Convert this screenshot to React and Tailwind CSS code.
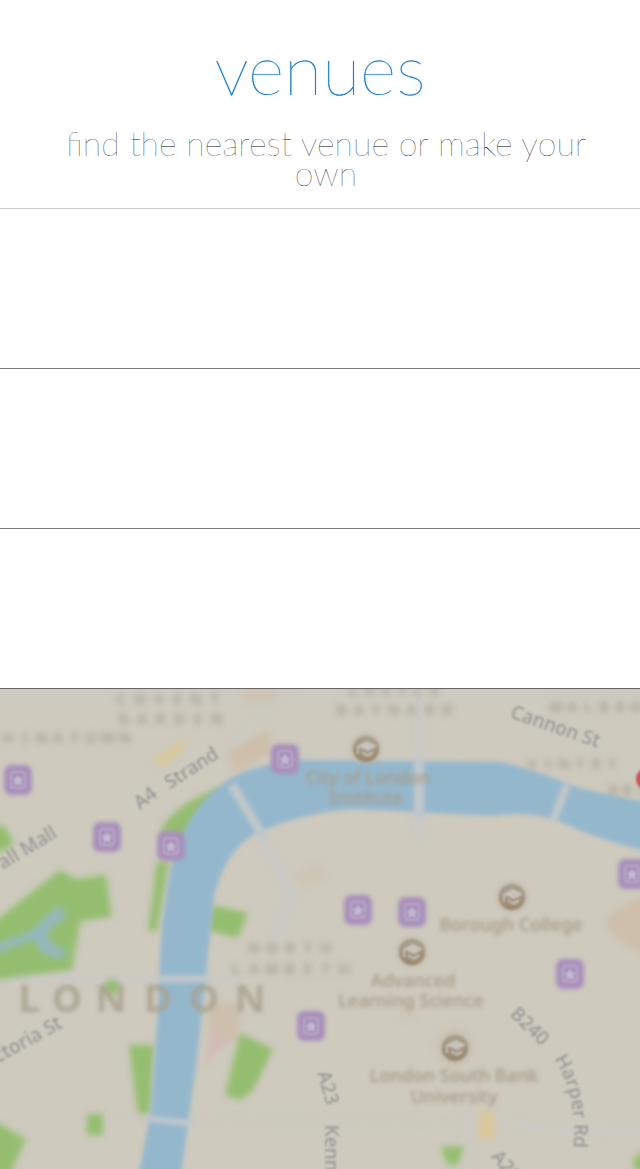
const stations = [
  [18, 91], [107, 148], [171, 157], [285, 70], [358, 221], [412, 223], [632, 185], [570, 285], [311, 337],
];

const colleges = [
  [366, 60], [512, 208], [412, 263], [455, 359],
];

const districts = [
  ["COVENT", 168, 15, 112],
  ["GARDEN", 170, 35, 112],
  ["CHINATOWN", 58, 54, 150],
  ["CASTLE", 394, 7, 98],
  ["BAYNARD", 394, 26, 124],
  ["WALBROOK", 612, 23, 128],
  ["VINTRY", 572, 80, 96],
  ["BRIDGE", 648, 106, 84],
  ["NORTH", 290, 264, 90],
  ["LAMBETH", 290, 285, 126],
];

const places = [
  ["City of London", 368, 95],
  ["Institute", 366, 115],
  ["Borough College", 511, 242],
  ["Advanced", 413, 298],
  ["Learning Science", 411, 318],
  ["London South Bank", 454, 393],
  ["University", 454, 414],
];

const streets = [
  ["A4", 146, 110, -38],
  ["Strand", 192, 80, -33],
  ["Pall Mall", 23, 163, -31],
  ["Cannon St", 555, 39, 19],
  ["Victoria St", 21, 356, -29],
  ["A23", 327, 399, 74],
  ["Kennington", 330, 489, 90],
  ["B240", 529, 338, 44],
  ["A201", 509, 482, 50],
];

function Station({ x, y }) {
  return (
    <g transform={`translate(${x} ${y})`}>
      <rect x="-14" y="-15" width="28" height="30" rx="7" fill="#a890ba" filter="url(#soft)" />
      <g filter="url(#slight)">
        <rect x="-7" y="-8" width="14" height="16" rx="3" fill="none" stroke="#b9a8c6" strokeWidth="2" />
        <path d="M0-5 2-2 5-1 3 2 4 6 0 4-4 6-3 2-5-1-2-2Z" fill="#c4b9d1" />
      </g>
    </g>
  );
}

function College({ x, y }) {
  return (
    <g transform={`translate(${x} ${y})`}>
      <circle r="15" fill="#b5aa9a" opacity="0.6" filter="url(#soft)" />
      <g filter="url(#slight)">
        <circle r="13" fill="url(#badge)" />
        <path d="M-9-3 1-8 11-3 2 2Z" fill="#c8c3bc" />
        <path d="M-8-3V5" stroke="#c2bbb1" strokeWidth="2" />
        <path d="M-4 2 1 5 7 2V5L2 8-4 5Z" fill="#c2bbb1" />
      </g>
    </g>
  );
}

function VenueMap() {
  return (
    <svg viewBox="0 0 640 480" role="img" aria-label="Map of venues in London" className="block h-auto w-full bg-[#cecabe] font-['Noto_Sans',sans-serif]">
      <defs>
        <filter id="soft" x="-50%" y="-50%" width="200%" height="200%"><feGaussianBlur stdDeviation="2" /></filter>
        <filter id="slight" x="-20%" y="-20%" width="140%" height="140%"><feGaussianBlur stdDeviation="0.8" /></filter>
        <filter id="water" filterUnits="userSpaceOnUse" x="-30" y="-30" width="720" height="560"><feGaussianBlur stdDeviation="2.2" /></filter>
        <filter id="area" filterUnits="userSpaceOnUse" x="-30" y="-30" width="700" height="540"><feGaussianBlur stdDeviation="3" /></filter>
        <filter id="text" filterUnits="userSpaceOnUse" x="-50" y="-30" width="760" height="560"><feGaussianBlur stdDeviation="2" /></filter>
        <filter id="far" filterUnits="userSpaceOnUse" x="-50" y="-30" width="760" height="560"><feGaussianBlur stdDeviation="3" /></filter>
        <filter id="street" filterUnits="userSpaceOnUse" x="-50" y="-50" width="760" height="600"><feGaussianBlur stdDeviation="1.2" /></filter>
        <linearGradient id="badge" x1="0" y1="0" x2="0" y2="1">
          <stop offset="0" stopColor="#aaa092" />
          <stop offset="1" stopColor="#99886c" />
        </linearGradient>
        <path id="harper" d="M554 370Q579 408 573 462" />
      </defs>

      <g filter="url(#area)">
        <g fill="#cdbfab">
          <path d="M227 63 269 40 272 64 235 84Z" />
          <path d="M240 0H292L276 12 248 14Z" opacity="0.6" />
          <path d="M293 187 317 173 327 189 300 198Z" opacity="0.5" />
          <path d="M604 234Q620 212 655 205V268Q620 260 604 234Z" />
          <path d="M208 315H240L238 350 210 364Z" />
          <circle cx="455" cy="357" r="21" opacity="0.35" />
          <circle cx="407" cy="323" r="9" opacity="0.3" />
        </g>
        <path d="M215 336 203 378 225 354Z" fill="#d2b9b8" />
        <path d="M153 71 184 50V61L160 78Z" fill="#d8c89a" />
        <rect x="478" y="423" width="17" height="27" rx="5" fill="#d9c899" />

        <g fill="none" stroke="#cac9c7" strokeWidth="7">
          <path d="M419 0V150" strokeWidth="9" />
          <path d="M0 290H240" strokeWidth="6" />
          <path d="M232 95 293 206 274 250" strokeWidth="9" />
          <path d="M120 426 640 440" strokeWidth="3" opacity="0.5" />
          <path d="M468 480V424M496 428Q545 446 640 440" strokeWidth="8" opacity="0.6" />
          <path d="M232 57 285 0M275 69 430 70" strokeWidth="5" opacity="0.6" />
        </g>

        <path d="M-10 236 60 181 76 190 106 186 112 228 80 232 72 281-10 292Z" fill="#94bd6f" />
        <path d="M-8 257 32 242 58 217 67 226 48 241 48 252 67 263 60 270 42 263 34 250-8 265Z" fill="#94b7bd" />
        <g fill="#94bd6f">
          <path d="M160 144Q170 116 224 97L185 151Z" />
          <path d="M157 173 169 172 157 242 148 242Z" />
          <path d="M-8 137 5 137 14 155-8 167Z" />
          <path d="M212 216 248 224 238 249 208 241Z" />
          <path d="M129 356H154L150 425 138 425Z" />
          <path d="M240 344 273 360 253 401 240 411 225 406Z" />
          <path d="M-10 430 26 450 8 490H-10Z" />
          <path d="M87 425H103V446H87Z" />
          <path d="M440 458 465 457 457 476 449 477Z" />
          <circle cx="112" cy="298" r="8" />
          <circle cx="643" cy="474" r="10" />
        </g>
      </g>

      <g filter="url(#water)">
        <path d="M219 98Q243 76 301 71L500 73Q525 77 579 99L660 116V165Q600 152 568 136Q532 120 493 127L354 120Q300 124 254 145Q224 164 214 208Q206 288 197 369L179 500H136L151 422Q158 331 160 269Q163 207 175 162Q191 118 219 98Z" fill="#95b7cc" />
        <g fill="none" stroke="#c0c7ca">
          <path d="M232 96 264 149" strokeWidth="9" />
          <path d="M419 70V129" strokeWidth="10" />
          <path d="M567 96 553 132" strokeWidth="8" />
          <path d="M157 290H211" strokeWidth="7" />
          <path d="M145 429 195 435" strokeWidth="6" />
        </g>
      </g>

      <g filter="url(#far)" textAnchor="middle" fill="#a39f92" fontSize="15" fontWeight="600">
        {districts.map(([name, x, y, width]) => (
          <g key={name}>
            {name.split("").map((letter, i, all) => (
              <text key={i} x={x - width / 2 + (width * (i + 0.5)) / all.length} y={y}>{letter}</text>
            ))}
          </g>
        ))}
      </g>
      <g filter="url(#text)" textAnchor="middle">
        <g fill="#a8a28f" fontSize="38" fontWeight="700" opacity="0.85">
          {"LONDON".split("").map((letter, i) => (
            <text key={i} x={[29, 67, 111, 158, 204, 250][i]} y="323">{letter}</text>
          ))}
        </g>
        <g fill="#a69a85" fontSize="18" fontWeight="500">
          {places.map(([name, x, y]) => <text key={name} x={x} y={y}>{name}</text>)}
        </g>
      </g>

      {stations.map(([x, y]) => <Station key={`${x}-${y}`} x={x} y={y} />)}
      {colleges.map(([x, y]) => <College key={`${x}-${y}`} x={x} y={y} />)}

      <g filter="url(#street)" fill="#9a9898" fontSize="19" fontWeight="500" textAnchor="middle">
        {streets.map(([name, x, y, angle]) => (
          <text key={name} transform={`translate(${x} ${y}) rotate(${angle})`} dominantBaseline="middle">{name}</text>
        ))}
        <text textAnchor="start"><textPath href="#harper">Harper Rd</textPath></text>
      </g>
      <circle cx="647" cy="90" r="11" fill="#ce535b" filter="url(#slight)" />
    </svg>
  );
}

export default function App() {
  return (
    <main className="bg-white text-center font-['Lato',sans-serif] font-thin">
      <header className="border-b border-[#cccccc] px-10 pt-8 pb-5">
        <h1 className="text-[70px] leading-[72px] text-[#1878c4] [text-shadow:0_0_1px_#1878c4]">venues</h1>
        <p className="mt-6 pl-3 text-[34px] leading-[30px] text-black">find the nearest venue or make your own</p>
      </header>
      <ul>
        <li className="h-40 border-b border-[#777777]" />
        <li className="h-40 border-b border-[#777777]" />
        <li className="h-40 border-b border-[#666666]" />
      </ul>
      <VenueMap />
    </main>
  );
}
